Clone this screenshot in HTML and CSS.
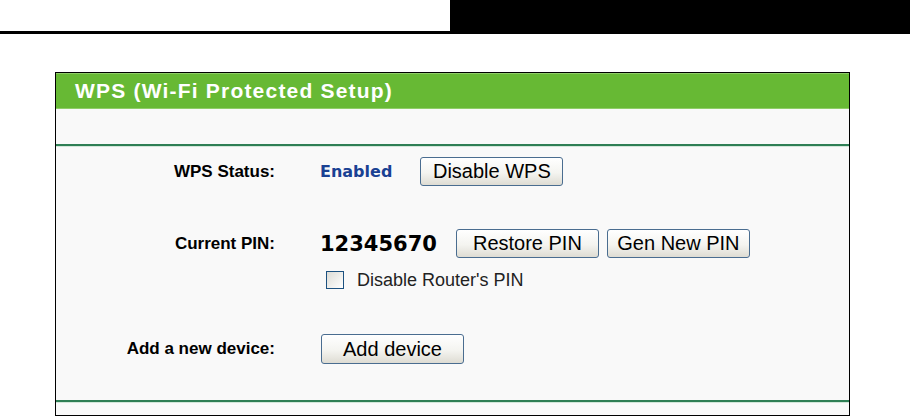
FILE: index.html
```html
<!DOCTYPE html>
<html lang="en">
<head>
  <meta charset="UTF-8">
  <title>WPS (Wi-Fi Protected Setup)</title>
  <link rel="stylesheet" href="styles.css">
</head>
<body>

<div class="page-top">
  <div class="top-left"></div>
  <div class="top-right"></div>
</div>

<div class="panel">
  <div class="panel-title">WPS (Wi-Fi Protected Setup)</div>
  <div class="panel-strip"></div>

  <div class="panel-body">
    <div class="row row-status">
      <div class="label">WPS Status:</div>
      <div class="value">
        <span class="status">Enabled</span>
        <button class="btn">Disable WPS</button>
      </div>
    </div>

    <div class="row row-pin">
      <div class="label">Current PIN:</div>
      <div class="value">
        <span class="pin">12345670</span>
        <button class="btn">Restore PIN</button>
        <button class="btn btn-next">Gen New PIN</button>
      </div>
    </div>

    <div class="row row-check">
      <div class="label"></div>
      <label class="value check-label">
        <input type="checkbox" class="check">
        Disable Router's PIN
      </label>
    </div>

    <div class="row row-add">
      <div class="label">Add a new device:</div>
      <div class="value">
        <button class="btn btn-add">Add device</button>
      </div>
    </div>
  </div>

  <div class="panel-foot"></div>
</div>

</body>
</html>
```

FILE: styles.css
```css
:root {
  --green: #67b934;
  --green-light: #8fcd67;
  --line: #2f7f55;
  --line-light: #d3e7da;
  --panel-bg: #f9f9f9;
  --blue: #1a4193;
  --btn-border: #4a6d90;
}
body {
  margin: 0;
  padding: 0;
  background: #ffffff;
  font-family: "Liberation Sans", Arial, sans-serif;
  color: #000000;
}
.page-top {
  display: flex;
  height: 34px;
}
.top-left {
  width: 450px;
  border-bottom: 3px solid #000000;
  box-sizing: border-box;
}
.top-right {
  flex: 1;
  background: #000000;
}
.panel {
  margin: 38px 0 0 55px;
  width: 795px;
  border: 1px solid #000000;
  box-sizing: border-box;
  background: var(--panel-bg);
}
.panel-title {
  height: 36px;
  box-sizing: border-box;
  background: var(--green);
  border-top: 1px solid var(--green-light);
  border-bottom: 1px solid var(--green-light);
  color: #ffffff;
  font-weight: bold;
  font-size: 21px;
  letter-spacing: 1.2px;
  line-height: 33px;
  padding-left: 19px;
}
.panel-strip {
  height: 35px;
}
.panel-body {
  border-top: 2px solid var(--line);
  box-shadow: inset 0 1px 0 var(--line-light);
  padding: 11px 0 36px;
}
.panel-foot {
  height: 13px;
  border-top: 2px solid var(--line);
  box-shadow: inset 0 1px 0 var(--line-light);
}
.row {
  display: flex;
  align-items: center;
}
.row-pin {
  margin-top: 43px;
}
.row-check {
  height: 18px;
  margin-top: 13px;
}
.row-add {
  margin-top: 45px;
}
.label {
  width: 219px;
  margin-right: 45px;
  text-align: right;
  font-weight: bold;
  font-size: 17px;
}
.value {
  display: flex;
  align-items: center;
}
.status {
  font-family: "DejaVu Sans", Verdana, sans-serif;
  font-weight: bold;
  font-size: 16px;
  color: var(--blue);
  margin-right: 28px;
}
.pin {
  font-family: "DejaVu Sans", Verdana, sans-serif;
  font-weight: bold;
  font-size: 21px;
  margin-right: 19px;
}
.btn {
  width: 143px;
  height: 29px;
  padding: 0;
  border: 1px solid var(--btn-border);
  border-radius: 3px;
  background: linear-gradient(#ffffff, #f4f4f0 55%, #dedcd3);
  font-family: "Liberation Sans", Arial, sans-serif;
  font-size: 20px;
  color: #000000;
  cursor: pointer;
}
.btn-next {
  margin-left: 8px;
}
.btn-add {
  height: 30px;
  margin-left: 1px;
}
.check-label {
  height: 18px;
  line-height: 18px;
  font-size: 18px;
  color: #222222;
}
.check {
  appearance: none;
  width: 18px;
  height: 18px;
  margin: 0 13px 0 6px;
  border: 1px solid #1c5180;
  box-sizing: border-box;
  background: linear-gradient(135deg, #dcdcd6, #ffffff);
}
```
